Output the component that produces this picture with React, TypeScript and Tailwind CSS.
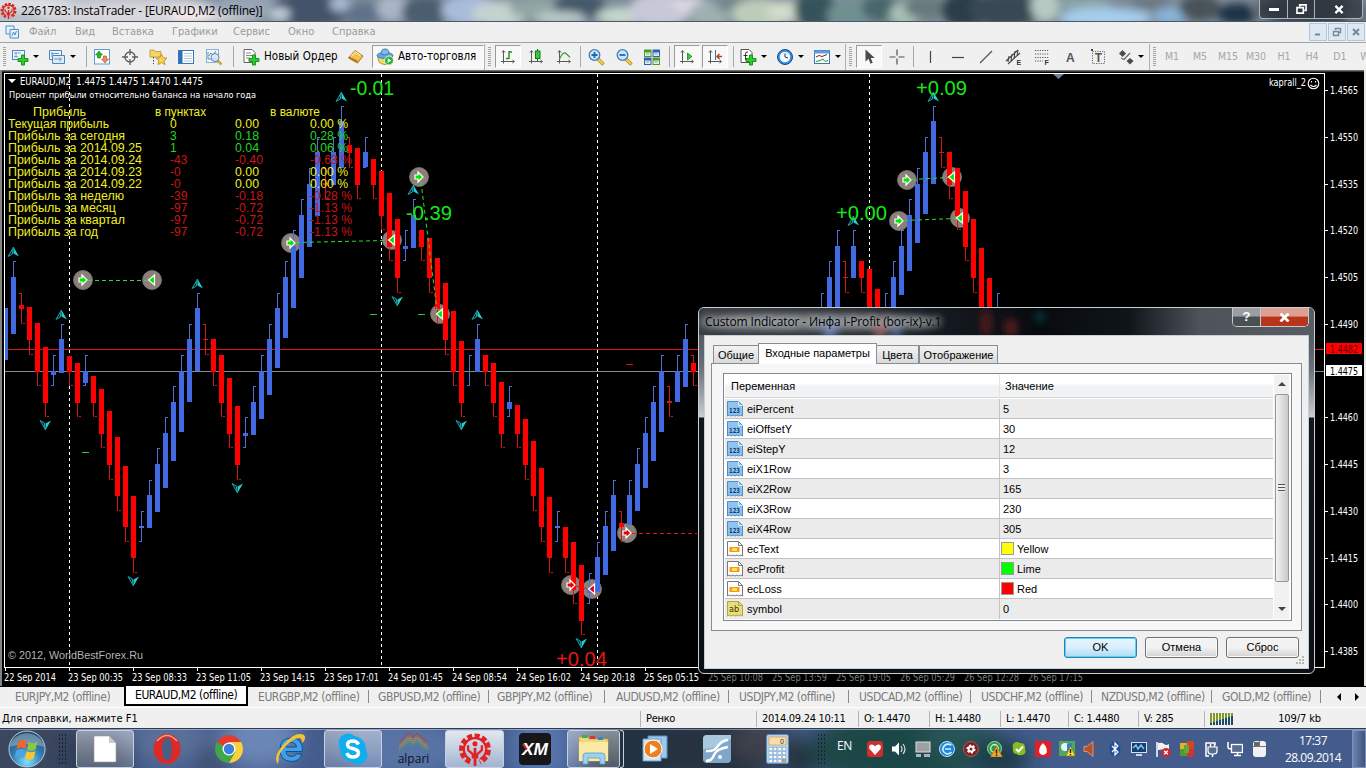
import type { ReactNode } from "react";
import clsx from "clsx";

const TAHOMA = "font-['DejaVu_Sans_Condensed','DejaVu_Sans',sans-serif]";
const BLUE = "#4169e1";
const RED = "#ff0000";

// [x, color, bodyTop, bodyBottom, wickTop, wickBottom]
type Candle = [number, "b" | "r", number, number, number, number];

const candles: Candle[] = [
  [5, "b", 308, 360, 308, 360], [13, "b", 277, 334, 261, 334], [21, "r", 305, 309, 293, 324], [29, "r", 307, 340, 307, 355],
  [37, "r", 323, 372, 323, 386], [45, "r", 347, 403, 347, 417], [53, "b", 371, 375, 355, 386], [61, "b", 339, 373, 324, 373],
  [69, "r", 356, 372, 356, 386], [77, "r", 363, 403, 363, 417], [85, "b", 371, 383, 355, 386], [93, "r", 376, 403, 376, 417],
  [101, "r", 389, 434, 389, 448], [109, "r", 411, 465, 411, 480], [117, "r", 437, 496, 437, 511], [125, "r", 466, 527, 466, 542],
  [133, "r", 496, 558, 496, 573], [141, "b", 526, 528, 511, 542], [149, "b", 495, 528, 480, 528], [157, "b", 464, 512, 448, 512],
  [165, "b", 433, 488, 417, 488], [173, "b", 402, 461, 386, 461], [181, "b", 371, 432, 355, 432], [189, "b", 339, 402, 324, 402],
  [197, "b", 308, 371, 293, 371], [205, "r", 339, 340, 324, 355], [213, "r", 339, 372, 339, 386], [221, "r", 355, 403, 355, 417],
  [229, "r", 378, 434, 378, 448], [237, "r", 406, 465, 406, 480], [245, "b", 433, 436, 417, 448], [253, "b", 402, 435, 386, 435],
  [261, "b", 371, 419, 355, 419], [269, "b", 339, 395, 324, 395], [277, "b", 308, 368, 293, 368], [285, "b", 277, 338, 261, 338],
  [293, "b", 246, 308, 230, 308], [301, "b", 215, 278, 199, 278], [309, "b", 184, 247, 168, 247], [317, "b", 152, 216, 137, 216],
  [325, "r", 183, 185, 168, 199], [333, "b", 152, 185, 137, 185], [341, "b", 121, 168, 106, 168], [349, "r", 145, 153, 137, 168],
  [357, "r", 148, 185, 148, 199], [365, "b", 152, 167, 137, 168], [373, "r", 159, 185, 159, 199], [381, "r", 171, 216, 171, 230],
  [389, "r", 193, 247, 193, 261], [397, "r", 219, 278, 219, 293], [405, "b", 246, 249, 230, 261], [413, "b", 215, 248, 199, 248],
  [421, "r", 230, 247, 230, 261], [429, "r", 238, 278, 238, 293], [437, "r", 258, 309, 258, 324], [445, "r", 283, 340, 283, 355],
  [453, "r", 311, 372, 311, 386], [461, "r", 341, 403, 341, 417], [469, "b", 371, 371, 355, 386], [477, "b", 339, 372, 324, 372],
  [485, "r", 355, 372, 355, 386], [493, "r", 363, 403, 363, 417], [501, "r", 382, 434, 382, 448], [509, "b", 402, 409, 386, 417],
  [517, "r", 405, 434, 405, 448], [525, "r", 419, 465, 419, 480], [533, "r", 441, 496, 441, 511], [541, "r", 468, 527, 468, 542],
  [549, "r", 497, 558, 497, 573], [557, "b", 526, 528, 511, 542], [565, "r", 527, 558, 527, 573], [573, "r", 542, 590, 542, 604],
  [581, "r", 565, 621, 565, 635], [589, "b", 588, 593, 573, 604], [597, "b", 557, 592, 542, 592], [605, "b", 526, 575, 511, 575],
  [613, "b", 495, 551, 480, 551], [621, "r", 523, 527, 511, 542], [629, "b", 495, 525, 480, 525], [637, "b", 464, 511, 448, 511],
  [645, "b", 433, 488, 417, 488], [653, "b", 402, 461, 386, 461], [661, "b", 371, 432, 355, 432], [669, "r", 401, 403, 386, 417],
  [677, "b", 371, 402, 355, 402], [685, "b", 339, 387, 324, 387], [693, "r", 363, 372, 355, 386], [821, "b", 308, 360, 293, 360],
  [829, "b", 277, 330, 261, 330], [837, "b", 246, 310, 230, 310], [845, "r", 277, 278, 261, 293], [853, "b", 246, 278, 230, 278],
  [861, "r", 261, 278, 261, 293], [869, "r", 269, 310, 269, 320], [877, "r", 289, 330, 289, 340], [885, "b", 308, 330, 293, 330],
  [893, "b", 277, 320, 261, 320], [901, "b", 246, 295, 230, 295], [909, "b", 215, 271, 199, 271], [917, "b", 184, 243, 168, 243],
  [925, "b", 152, 214, 137, 214], [933, "b", 121, 184, 106, 184], [941, "r", 152, 153, 137, 168], [949, "r", 152, 185, 152, 199],
  [957, "r", 168, 216, 168, 230], [965, "r", 191, 247, 191, 261], [973, "r", 219, 278, 219, 293], [981, "r", 248, 310, 248, 320],
  [989, "r", 278, 330, 278, 340], [997, "b", 308, 320, 293, 330],
];

const fractals: [number, number, boolean][] = [
  [13, 252, true], [61, 315, true], [197, 284, true], [341, 97, true], [413, 190, true], [477, 315, true], [853, 221, true], [933, 97, true],
  [45, 425, false], [133, 581, false], [237, 488, false], [397, 301, false], [461, 425, false], [581, 643, false],
];

const deals: [number, number, "open" | "close", string][] = [
  [83, 280, "open", "#00e600"], [152, 280, "close", "#00e600"], [291, 243, "open", "#00e600"], [392, 240, "close", "#00e600"],
  [419, 177, "open", "#00e600"], [440, 314, "close", "#00e600"], [571, 585, "open", "#e60000"], [592, 589, "close", "#e60000"],
  [627, 533, "open", "#e60000"], [907, 180, "open", "#00e600"], [952, 177, "close", "#00e600"], [899, 221, "open", "#00e600"],
  [960, 218, "close", "#00e600"],
];

const Y = "#eeee22";
const G = "#22d622";
const R = "#cc1414";
const profits: [string, number, string, string, string, string, string, string][] = [
  ["Текущая прибыль", 101, "0", Y, "0.00", Y, "0.00 %", Y],
  ["Прибыль за сегодня", 117, "3", G, "0.18", G, "0.28 %", G],
  ["Прибыль за 2014.09.25", 134, "1", G, "0.04", G, "0.06 %", G],
  ["Прибыль за 2014.09.24", 134, "-43", R, "-0.40", R, "-0.63 %", R],
  ["Прибыль за 2014.09.23", 134, "-0", R, "0.00", Y, "0.00 %", Y],
  ["Прибыль за 2014.09.22", 134, "-0", R, "0.00", Y, "0.00 %", Y],
  ["Прибыль за неделю", 116, "-39", R, "-0.18", R, "-0.28 %", R],
  ["Прибыль за месяц", 108, "-97", R, "-0.72", R, "-1.13 %", R],
  ["Прибыль за квартал", 117, "-97", R, "-0.72", R, "-1.13 %", R],
  ["Прибыль за год", 90, "-97", R, "-0.72", R, "-1.13 %", R],
];

const times = [
  "22 Sep 2014", "23 Sep 00:35", "23 Sep 08:33", "23 Sep 11:05", "23 Sep 14:15", "23 Sep 17:01", "24 Sep 01:45", "24 Sep 08:54", "24 Sep 16:02",
  "24 Sep 20:18", "25 Sep 05:15", "25 Sep 10:08", "25 Sep 13:59", "25 Sep 19:05", "26 Sep 05:29", "26 Sep 12:28", "26 Sep 17:15",
];

const prices = ["1.4565", "1.4550", "1.4535", "1.4520", "1.4505", "1.4490", "", "1.4460", "1.4445", "1.4430", "1.4415", "1.4400", "1.4385"];

const Label = ({ x, y, w, fill, size, font, children }: { x: number; y: number; w?: number; fill: string; size: number; font?: string; children: string }) => (
  <text x={x} y={y} textLength={w} lengthAdjust="spacingAndGlyphs" fill={fill} fontSize={size} fontFamily={font ?? "Liberation Sans, sans-serif"} style={{ whiteSpace: "pre" }}>
    {children}
  </text>
);

const CandleShape = ({ c }: { c: Candle }) => {
  const [x, k, t, b, wt, wb] = c;
  const wick = k === "b" ? "#5070d8" : "#d01818";
  const up = k === "b" ? 1 : -2;
  return (
    <g shapeRendering="crispEdges">
      <rect x={x} y={wt} width={1} height={wb - wt} fill={wick} />
      {wt < t && <rect x={x + up} y={wt} width={2} height={1} fill={wick} />}
      {wb > b && <rect x={x - up - (k === "b" ? 1 : 0)} y={wb - 1} width={2} height={1} fill={wick} />}
      {b > t && <rect x={x - 2} y={t} width={5} height={b - t} fill={b - t < 3 ? wick : k === "b" ? BLUE : RED} />}
    </g>
  );
};

const Chart = () => (
  <svg className="absolute inset-0" width="1366" height="616" viewBox="0 70 1366 616">
    <rect x="0" y="70" width="1366" height="616" fill="#000" />
    <rect x="0" y="70" width="1366" height="1.5" fill="#6f6f6b" />
    <rect x="0" y="70" width="2" height="616" fill="#85857f" />
    <rect x="1364" y="70" width="2" height="616" fill="#e8e8e4" />
    <clipPath id="plot">
      <rect x="5" y="74" width="1319" height="593" />
    </clipPath>
    <g clipPath="url(#plot)" shapeRendering="crispEdges">
      {[69, 381, 597, 869].map((x) => (
        <line key={x} x1={x + 0.5} x2={x + 0.5} y1="74" y2="665" stroke="#fff" strokeDasharray="3 3" />
      ))}
      <rect x="5" y="349" width="1320" height="1" fill="#e01414" />
      <rect x="5" y="371" width="1320" height="1" fill="#7f8b96" />
    </g>
    <g clipPath="url(#plot)">
      {deals.map(([x, y]) => (
        <circle key={`${x}-${y}`} cx={x} cy={y} r="9.5" fill="#8b7f77" stroke="#7a7a80" strokeWidth="0.8" />
      ))}
      {candles.map((c) => (
        <CandleShape key={c[0]} c={c} />
      ))}
      <g stroke="#2fdc2f" strokeDasharray="4 3" fill="none">
        <path d="M88 280.5H147M296 242.5L387 240.5M421 182L437 310M912 179.5L948 177.5M904 220.5L956 218.5" />
        <path stroke="#dc1a1a" d="M632 533.5H697M576 586L588 589" />
      </g>
      {fractals.map(([x, y, up]) => (
        <g key={`${x}-${y}`} transform={`translate(${x + 0.5} ${y}) scale(1 ${up ? 1 : -1})`} strokeWidth="1">
          <path d="M0 -5L-5.500 4.500L-1 2V-1Z" fill="#052a2e" stroke="#1a9ea6" />
          <path d="M0 -5L5.500 4.500L0 1.500Z" fill="#28ccd0" />
        </g>
      ))}
      {deals.map(([x, y, kind, fill]) => (
        <path
          key={`${x}-${y}-m`}
          fill={fill}
          stroke="#fff"
          strokeWidth="1.2"
          d={kind === "open" ? `M${x - 4} ${y - 2}h3v-3l5 5l-5 5v-3h-3z` : `M${x + 2.500} ${y - 5}v10l-6 -5z`}
        />
      ))}
      <path d="M82 452.500h7M370 314.500h7M418 314.500h7" stroke="#2ccc2c" />
      <path d="M626 364.500h7" stroke="#c01818" />
    </g>
    <path d="M4.500 667.500V73.500H1324.500V667.500H4" fill="none" stroke="#fff" shapeRendering="crispEdges" />
    <path d="M8 79h8l-4 4z" fill="#fff" />
    <path d="M1053 74h11l-5.500 5z" fill="#708090" />
    <Label x={20} y={85} w={183} size={10} fill="#fff" font="DejaVu Sans Condensed">{"EURAUD,M2  1.4475 1.4475 1.4470 1.4475"}</Label>
    <Label x={9} y={98} w={247} size={9} fill="#fff" font="DejaVu Sans Condensed">Процент прибыли относительно баланса на начало года</Label>
    <Label x={33} y={116} w={53} size={12} fill={Y}>Прибыль</Label>
    <Label x={155} y={116} w={51} size={12} fill={Y}>в пунктах</Label>
    <Label x={270} y={116} w={50} size={12} fill={Y}>в валюте</Label>
    {profits.map((p, i) => (
      <g key={p[0]}>
        <Label x={8} y={128 + i * 12} w={p[1]} size={12} fill={Y}>{p[0]}</Label>
        <Label x={170} y={128 + i * 12} size={12} fill={p[3]}>{p[2]}</Label>
        <Label x={235} y={128 + i * 12} w={p[4].length > 4 ? 28 : 24} size={12} fill={p[5]}>{p[4]}</Label>
        <Label x={310} y={128 + i * 12} w={p[6].length > 6 ? 42 : 38} size={12} fill={p[7]}>{p[6]}</Label>
      </g>
    ))}
    <Label x={350} y={95} w={44} size={20} fill="#19e619">-0.01</Label>
    <Label x={406} y={220} w={46} size={20} fill="#19e619">-0.39</Label>
    <Label x={836} y={220} w={51} size={20} fill="#19e619">+0.00</Label>
    <Label x={916} y={95} w={51} size={20} fill="#19e619">+0.09</Label>
    <Label x={556} y={666} w={51} size={20} fill="#e31818">+0.04</Label>
    <Label x={1269} y={86} w={37} size={10} fill="#fff" font="DejaVu Sans Condensed">kaprall_2</Label>
    <g fill="none" stroke="#fff" strokeWidth="1.1">
      <circle cx="1313.500" cy="83.500" r="5.300" />
      <path d="M1311.500 81v1.500M1315.500 81v1.500M1310.500 85q3 3 6 0" />
    </g>
    <Label x={8} y={659} w={135} size={11.5} fill="#b4b4b4">© 2012, WorldBestForex.Ru</Label>
    {prices.map((p, i) =>
      p ? (
        <g key={p}>
          <rect x="1325" y={90 + Math.round(i * 46.75)} width="3" height="1" fill="#fff" />
          <Label x={1330} y={94 + Math.round(i * 46.75)} w={28} size={10} fill="#fff" font="DejaVu Sans Condensed">{p}</Label>
        </g>
      ) : null,
    )}
    <rect x="1326" y="343" width="36" height="11" fill="#ff0000" />
    <Label x={1330} y={352.5} w={28} size={10} fill="#5a0000" font="DejaVu Sans Condensed">1.4482</Label>
    <rect x="1326" y="365" width="36" height="11" fill="#fff" />
    <Label x={1330} y={374.5} w={28} size={10} fill="#000" font="DejaVu Sans Condensed">1.4475</Label>
    {times.map((t, i) => (
      <g key={t}>
        {i < 11 && <rect x={5 + i * 64} y="668" width="1" height="3" fill="#fff" />}
        <Label x={4 + i * 64} y={681} w={i ? 55 : 52} size={10} fill={i < 11 ? "#fff" : "#7a7a7a"} font="DejaVu Sans Condensed">{t}</Label>
      </g>
    ))}
  </svg>
);

const Blobs = ({ items, w, h, blur, id, grow = 1 }: { items: [number, number, number, number, string][]; w: number; h: number; blur: number; id: string; grow?: number }) => (
  <svg className="absolute inset-0" width={w} height={h}>
    <filter id={id} x="-20%" y="-50%" width="140%" height="200%">
      <feGaussianBlur stdDeviation={blur} />
    </filter>
    <g filter={`url(#${id})`}>
      {items.map(([x, y, rx, ry, fill], i) => (
        <ellipse key={i} cx={x} cy={y} rx={rx * grow} ry={ry * grow} fill={fill} />
      ))}
    </g>
  </svg>
);

const titleBlobs: [number, number, number, number, string][] = [
  [60, 10, 120, 18, "#b9bfca"], [20, 4, 40, 5, "#dfe3e8"], [150, 14, 90, 9, "#d8d7dc"], [190, 16, 16, 6, "#f4e9ea"], [250, 6, 30, 8, "#97a5b6"],
  [310, 10, 30, 14, "#42526b"], [280, 14, 8, 5, "#c3cfdb"], [340, 4, 8, 6, "#a9bad0"], [365, 14, 16, 8, "#5d7188"], [392, 8, 12, 10, "#a8b6c6"],
  [425, 12, 18, 12, "#4c5d70"], [470, 10, 22, 12, "#a9bcdb"], [500, 14, 22, 10, "#c4d3cf"], [535, 8, 20, 8, "#91a6a5"], [580, 6, 20, 10, "#44596a"],
  [560, 18, 20, 5, "#bccbc8"], [625, 16, 22, 7, "#c5d8cc"], [660, 10, 24, 14, "#c7c8d8"], [690, 4, 14, 6, "#dcd8e2"], [710, 14, 16, 10, "#9eb0b0"],
  [735, 4, 15, 7, "#75878a"], [760, 14, 22, 12, "#bdccba"], [785, 12, 14, 8, "#d3dccb"], [815, 10, 16, 14, "#35525a"], [850, 14, 18, 9, "#6f9090"],
  [880, 8, 14, 10, "#4a666a"], [905, 14, 12, 9, "#a9c2b6"], [925, 8, 16, 8, "#66797a"], [965, 10, 18, 14, "#2b3d49"], [1005, 10, 28, 14, "#394954"],
  [1045, 6, 11, 12, "#b7cac3"], [1085, 4, 20, 5, "#8ca9a9"], [1105, 18, 36, 8, "#a6cdee"], [1170, 16, 12, 7, "#88b3d8"], [1150, 3, 16, 4, "#68747c"],
  [1200, 8, 16, 10, "#4a5258"], [1238, 14, 16, 8, "#1f3046"], [1262, 8, 8, 8, "#6b7680"], [1310, 10, 38, 14, "#3b444d"], [1360, 14, 10, 9, "#67707a"],
];

const Gear = ({ size, fill }: { size: number; fill: string }) => (
  <svg width={size} height={size} viewBox="0 0 32 32" className="shrink-0" fill="none" stroke={fill}>
    <path d="M11.500 28A12.500 12.500 0 1 1 20.500 28" strokeWidth="5" strokeDasharray="4.600 2.200" />
    <path d="M11 25.500A10.500 10.500 0 1 1 21 25.500" strokeWidth="2.200" />
    <path d="M16 15v17" strokeWidth="2.600" />
    <path d="M14 25v-4L9.500 17V12.500M18 25v-4l4.500-4V12.500" strokeWidth="2.200" />
    <circle cx="16" cy="11" r="2.400" fill={fill} stroke="none" />
  </svg>
);

const TitleBar = () => (
  <header className="relative flex h-[21px] items-center overflow-hidden bg-[#7d8b98]">
    <Blobs items={titleBlobs} w={1366} h={22} blur={4.5} grow={1.3} id="tb" />
    <div className="relative flex h-full w-full items-center">
      <Gear size={17} fill="#d9261c" />
      <span className="ml-[4px] w-[242px] whitespace-nowrap font-['Open_Sans',sans-serif] text-[12px] tracking-[-0.22px] text-black">2261783: InstaTrader - [EURAUD,M2 (offline)]</span>
      <div className="ml-auto mr-[3px] flex h-[19px] self-start overflow-hidden rounded-b-[4px] border border-t-0 border-[#a9b3ba] bg-[#2c353d]/70 text-white">
        <span className="flex w-7 items-center justify-center border-r border-[#a9b3ba]"><i className="block h-[3px] w-[10px] bg-white" /></span>
        <span className="flex w-[27px] items-center justify-center border-r border-[#a9b3ba]">
          <svg width="11" height="10" viewBox="0 0 12 11" fill="none" stroke="#fff" strokeWidth="1.800"><path d="M4 3V1h7v6H9" /><path d="M1 4h7v6H1z" /></svg>
        </span>
        <span className="flex w-[47px] items-center justify-center">
          <svg width="10" height="9" viewBox="0 0 11 10" stroke="#fff" strokeWidth="2.600"><path d="M1.500 1l8 8M9.500 1l-8 8" /></svg>
        </span>
      </div>
    </div>
  </header>
);

const menu: [string, string][] = [
  ["Файл", "w-[46px]"], ["Вид", "w-[37px]"], ["Вставка", "w-[60px]"], ["Графики", "w-[61px]"], ["Сервис", "w-[55px]"], ["Окно", "w-[44px]"], ["Справка", "w-[60px]"],
];

const MdiButton = ({ children }: { children: ReactNode }) => (
  <span className="flex h-[18px] w-[18px] items-center justify-center border border-[#b3c7d8] bg-[#dce8f3]">
    <svg width="10" height="10" fill="none" stroke="#78889a" strokeWidth="1.400">{children}</svg>
  </span>
);

const MenuBar = () => (
  <nav className={clsx("flex h-[22px] items-center border-b border-t border-b-[#a3a3a3] border-t-[#4c5864] bg-[#f0f0f0] text-[11px] text-[#9b9b9b]", TAHOMA)}>
    <svg width="15" height="15" className="ml-[5px] mr-[9px]" fill="#e8f2fb" stroke="#4e90c6">
      <path d="M1 1h8v8H1z" /><path d="M5 4.500h8.500v8.500H5z" /><path d="M7 11l1.500-4 1.500 3 1.500-4" fill="none" />
    </svg>
    <div className="flex whitespace-nowrap">
      {menu.map(([m, w]) => (
        <span key={m} className={w}>{m}</span>
      ))}
    </div>
    <div className="ml-auto mr-px flex gap-px">
      <MdiButton><path d="M2 7.500h5" strokeWidth="2" /></MdiButton>
      <MdiButton><path d="M3.500 3V1.500h5v4H7M1.500 4.500h5v4h-5z" /></MdiButton>
      <MdiButton><path d="M2 2l6 6M8 2l-6 6" strokeWidth="2" /></MdiButton>
    </div>
  </nav>
);

const Plus = () => <path d="M10.500 7h3v3.500H17v3h-3.500V17h-3v-3.500H7v-3h3.500z" fill="#2ecc2e" stroke="#118a11" strokeWidth="0.9" />;
const Axes = () => <path d="M4.500 3v12.500M2 13.500h13M3 4.500l1.500-2 1.500 2M13.500 12l2 1.500-2 1.500" fill="none" stroke="#5a5a5a" />;
const Magnifier = ({ d }: { d: string }) => (
  <>
    <path d="M11 11l5.500 5.500" stroke="#b98a12" strokeWidth="3.400" />
    <path d="M11 11l5 5" stroke="#f5cf52" strokeWidth="2" />
    <circle cx="7.500" cy="7" r="5.300" fill="#cfe6f8" stroke="#3d7db8" strokeWidth="1.300" />
    <path d={d} stroke="#1c68b4" strokeWidth="1.800" />
  </>
);

const icons: Record<string, ReactNode> = {
  newChart: (<><rect x="1.500" y="2.500" width="12" height="9" fill="#eef5fc" stroke="#4b86bd" /><path d="M3 5h7M3 8.500h4M5 4v6" stroke="#7ba7cf" /><Plus /></>),
  profiles: (<><path d="M1.500 2.500h12v9h-12z" fill="#eef5fc" stroke="#4b86bd" /><path d="M4.500 7.500h12v8h-12z" fill="#dcebf8" stroke="#4b86bd" /><path d="M3 5.500h8M4 4v5M6 11h8M12 9.500v4" stroke="#6f98bf" /></>),
  market: (<><rect x="1.500" y="1.500" width="15" height="14.500" fill="#fff" stroke="#5c9bd4" /><path d="M6 3l3.500 4H7.500v3h-3V7h-2z" fill="#26b526" stroke="#157a15" strokeWidth=".6" /><path d="M12 15l-3.500-4h2V8h3v3h2z" fill="#f08b54" stroke="#b1481c" strokeWidth=".6" /></>),
  cross: <g fill="none" stroke="#5c5c5c" strokeWidth="1.300"><circle cx="9" cy="9" r="5" /><path d="M9 1v6M9 11v6M1 9h6M11 9h6" /></g>,
  navigator: (<><path d="M1 2h4l1.500 1.500H12V9H1z" fill="#f5d564" stroke="#b8902c" strokeWidth=".8" /><path d="M4.500 9v7" stroke="#444" strokeDasharray="1.500 1.500" /><path d="M12.500 6l1.700 3.700 3.900.4-3 2.600.9 3.900-3.500-2-3.500 2 .9-3.900-3-2.600 3.900-.4z" fill="#fbd24c" stroke="#b8861c" strokeWidth=".8" /></>),
  terminal: (<><rect x="1.500" y="2.500" width="15" height="13" fill="#fff" stroke="#3577b8" /><path d="M2 3h3.500v12H2z" fill="#2b6fc0" /><path d="M7 5.500h8M7 8h8M7 10.500h8M7 13h8" stroke="#9cb6d2" strokeWidth=".8" /></>),
  tester: (<><rect x="1.500" y="1.500" width="12" height="13" fill="#f2f7fc" stroke="#8ab0d3" /><path d="M3 4v7h8M4 8l2-3 2 2 3-4" stroke="#5a8cb9" fill="none" /><path d="M12 12l4.500 4.500" stroke="#d9a62a" strokeWidth="2.500" /><circle cx="10" cy="9.500" r="4" fill="#cfe4f6cc" stroke="#5a88b0" /></>),
  order: (<><path d="M2 1.500h8l3 3v10H2z" fill="#fff" stroke="#666" /><path d="M4 5h5M4 7.500h7M4 10h4" stroke="#888" /><Plus /></>),
  meta: (<><path d="M1.500 10L8 2.500l8 5.500-5.500 7z" fill="#f2c14e" stroke="#a8751c" /><path d="M1.500 10l9 5v-2.500L2.500 8.500z" fill="#b9781c" /><path d="M4 8.500L8.500 4l5 3.500" fill="none" stroke="#fae6a2" strokeWidth="1.500" /></>),
  auto: (<><path d="M2 9q-.5 7 7 7.500Q16 16 16 9z" fill="#f3d765" stroke="#b69626" /><ellipse cx="9" cy="7.500" rx="8" ry="3" fill="#63a9dd" stroke="#3a7cb4" /><path d="M5 6q0-5 4-5t4 5q-4 2-8 0z" fill="#7dbcea" stroke="#3a7cb4" /><circle cx="13" cy="12.500" r="4.500" fill="#2fae37" stroke="#e6f6e6" /><path d="M11.700 10l3.600 2.500-3.600 2.500z" fill="#fff" /></>),
  bars: (<><Axes /><path d="M10 3v8M10 4h3M7 10.500h3" stroke="#1b8f1b" strokeWidth="1.400" /></>),
  candle: (<><Axes /><path d="M10.500 1v12" stroke="#0d6b0d" /><rect x="8.500" y="3" width="4.500" height="7.500" fill="#35cc35" stroke="#0f7a0f" /></>),
  line: (<><Axes /><path d="M4.500 11Q8 3 11 5.500T15 9.500" fill="none" stroke="#2c9b2c" strokeWidth="1.200" /></>),
  zoomIn: <Magnifier d="M4.500 7h6M7.500 4v6" />,
  zoomOut: <Magnifier d="M4.500 7h6" />,
  tile: (<><path d="M1 1.500h7.500V9H1zM9.500 9.500H17V17H9.500z" fill="#4c9a28" /><path d="M9.500 1.500H17V9H9.500z" fill="#2b62b8" /><path d="M1 9.500h7.500V17H1z" fill="#2b62b8" /><path d="M2 4.500h5.500V8H2zM10.500 4.500H16V8h-5.500zM2 12.500h5.500V16H2zM10.500 12.500H16V16h-5.500z" fill="#e4f0e0" /><path d="M3 6h3M11.500 6h3M3 14h3M11.500 14h3" stroke="#7ea5c8" /></>),
  shift: (<><Axes /><path d="M9.500 5l4.500 3.500-4.500 3.500z" fill="#3cc53c" stroke="#157a15" strokeWidth=".7" /></>),
  scroll: (<><Axes /><path d="M9.500 2v10" stroke="#3370b0" /><path d="M16 8.500h-5M13.500 6L11 8.500l2.500 2.500" stroke="#b3401c" strokeWidth="1.400" fill="none" /></>),
  indicators: (<><path d="M2 1.500h8l3 3v10H2z" fill="#fff" stroke="#555" /><path d="M9 4Q6.500 3.500 6.500 6v6M4.500 7.500h4" stroke="#333" fill="none" /><Plus /></>),
  clock: (<><circle cx="9" cy="9" r="7.500" fill="#3f8ee0" stroke="#0f4c94" /><circle cx="9" cy="9" r="5.200" fill="#f4f9ff" /><path d="M9 5.500V9l3 1" fill="none" stroke="#333" /></>),
  template: (<><rect x="1.500" y="2.500" width="15" height="13" fill="#fff" stroke="#3a78b8" /><path d="M1.500 2.500h15v3h-15z" fill="#5c9ede" /><path d="M3 9l3-1.500 3 1 5-2" stroke="#912" fill="none" /><path d="M3 13.500l4-1 3-1.500 2 2.500 3-1" stroke="#1b9b1b" fill="none" /></>),
  cursor: <path d="M5.500 1.500v12l3-2.800 2 5 2.200-1-2-4.700h4z" fill="#4a4a4a" />,
  crosshair: <path d="M9 1.500v6M9 10.500v6M1.500 9h6M10.500 9h6" stroke="#4f4f4f" strokeWidth="1.200" />,
  vline: <path d="M9.500 3v12" stroke="#444" strokeWidth="1.200" />,
  hline: <path d="M3 9.500h12" stroke="#444" strokeWidth="1.200" />,
  trend: <path d="M3 15L15 3" stroke="#555" strokeWidth="1.200" />,
  channel: (<><path d="M1 13L13 2M3 16L15 5M4 8l-1 6M7 6l-1 7M10 3l-1 8M13 2l-1 6" stroke="#444" strokeWidth="1.100" /><text x="11.500" y="17" fontSize="7" fontWeight="bold" fontFamily="Liberation Sans" fill="#333">E</text></>),
  fibo: (<><path d="M2 2.500h14M2 6h14M2 9.500h14M2 13h8" stroke="#555" strokeDasharray="1.200 1.200" /><text x="11.500" y="17" fontSize="7" fontWeight="bold" fontFamily="Liberation Sans" fill="#333">F</text></>),
  text: <text x="5" y="14" fontSize="12" fontWeight="bold" fontFamily="Liberation Sans" fill="#555">A</text>,
  label: (<><rect x="3.500" y="3.500" width="12" height="12" fill="none" stroke="#666" strokeDasharray="1.200 1.200" /><text x="5.800" y="14" fontSize="12" fontWeight="bold" fontFamily="Liberation Sans" fill="#555">T</text><path d="M2 1h2v2H2z" fill="#444" /></>),
  arrows: (<><path d="M5.500 2l3.500 3.500-3.500 3.500-3.500-3.500z" fill="#4a4a4a" /><path d="M13 10l3.500 3-3.500 3.500-3.500-3.500z" fill="#4a4a4a" /><path d="M4 10l3 1.500L13 5" stroke="#666" fill="none" strokeWidth="1.200" /></>),
};

const Icon = ({ name }: { name: string }) => (
  <svg width="18" height="18" viewBox="0 0 18 18" className="shrink-0">{icons[name]}</svg>
);

const Tool = ({ name, on }: { name: string; on?: boolean }) => (
  <span className="flex h-[23px] w-7 shrink-0 items-center justify-center">
    <span className={clsx("flex h-[23px] w-[26px] items-center justify-center", on && "border border-b-white border-l-[#9b9b9b] border-r-white border-t-[#9b9b9b] bg-[#f8f8f8]")}>
      <Icon name={name} />
    </span>
  </span>
);

const DropTool = ({ name }: { name: string }) => (
  <span className="flex h-full w-[37px] shrink-0 items-center gap-[4px] pl-px">
    <Icon name={name} />
    <i className="block border-x-[3px] border-t-[3px] border-x-transparent border-t-black" />
  </span>
);

const Sep = ({ className }: { className: string }) => (
  <span className={clsx("flex shrink-0 justify-center", className)}><i className="block h-[21px] w-px bg-[#a8a8a8]" /></span>
);

const Grip = ({ line = true, className = "w-[10px]" }: { line?: boolean; className?: string }) => (
  <span className={clsx("flex h-full shrink-0 items-center gap-[3px]", className)}>
    <i className={clsx("block h-[26px] w-px", line ? "bg-[#b0b0b0]" : "-mr-[3px]")} />
    <i className="block h-[19px] w-[3px] bg-[repeating-linear-gradient(to_bottom,#a4a4a4_0_1px,#f0f0f0_1px_2px)]" />
  </span>
);

const Toolbar = () => (
  <div className={clsx("flex h-[27px] items-center overflow-hidden bg-[#f0f0f0] text-[11.5px]", TAHOMA)}>
    <span className="flex w-[10px] shrink-0 pl-[2px]"><Grip line={false} /></span>
    <DropTool name="newChart" />
    <DropTool name="profiles" />
    <Sep className="w-[4px]" />
    {["market", "cross", "navigator", "terminal", "tester"].map((n) => <Tool key={n} name={n} />)}
    <Sep className="w-[10px]" />
    <span className="flex w-[104px] shrink-0 items-center gap-[4px] whitespace-nowrap pl-[4px]"><Icon name="order" /><span className="tracking-[0.05px]">Новый Ордер</span></span>
    <Tool name="meta" />
    <span className="ml-[2px] flex h-[23px] w-[112px] shrink-0 items-center gap-[4px] whitespace-nowrap border border-b-white border-l-[#9b9b9b] border-r-white border-t-[#9b9b9b] bg-[#f8f8f8] pl-[3px]">
      <Icon name="auto" /><span className="tracking-[-0.05px]">Авто-торговля</span>
    </span>
    <Grip />
    <Tool name="bars" on />
    <Tool name="candle" />
    <Tool name="line" />
    <Sep className="w-[4px]" />
    <Tool name="zoomIn" />
    <Tool name="zoomOut" />
    <Tool name="tile" />
    <Sep className="w-[7px]" />
    <Tool name="shift" on />
    <Tool name="scroll" on />
    <Sep className="w-[9px]" />
    <DropTool name="indicators" />
    <DropTool name="clock" />
    <DropTool name="template" />
    <Grip className="-ml-[4px] w-[10px]" />
    <Tool name="cursor" on />
    <Tool name="crosshair" />
    <Sep className="w-[5px]" />
    {["vline", "hline", "trend", "channel", "fibo", "text", "label"].map((n) => <Tool key={n} name={n} />)}
    <span className="flex w-[37px] shrink-0 items-center gap-[3px] pl-[5px]">
      <Icon name="arrows" />
      <i className="block border-x-[3px] border-t-[3px] border-x-transparent border-t-black" />
    </span>
    <Grip className="w-[9px]" />
    {["M1", "M5", "M15", "M30", "H1", "H4", "D1", "W1"].map((t) => (
      <span key={t} className="w-7 shrink-0 text-center text-[10.5px] text-[#a6a6a6]">{t}</span>
    ))}
  </div>
);

const ParamIcon = ({ kind }: { kind: "int" | "color" | "str" }) => (
  <svg width="16" height="16" className="shrink-0">
    <path
      d="M.5 .500h11l4 4v10.500l-2-1-1.500 1-2-1-2 1-2-1-2 1-1.500-1-2 1z"
      fill={kind === "int" ? "#8fc3f0" : kind === "color" ? "#fff" : "#e9dc7e"}
      stroke={kind === "int" ? "#4f8cc4" : kind === "color" ? "#777" : "#b5a43c"}
    />
    <path d="M11.500 .500v4h4" fill="none" stroke={kind === "int" ? "#d8ecfc" : kind === "color" ? "#777" : "#b5a43c"} />
    {kind === "int" && <text x="2" y="11.500" fontSize="7" fontWeight="bold" fontFamily="DejaVu Sans Condensed" textLength="11" lengthAdjust="spacingAndGlyphs" fill="#113a6b">123</text>}
    {kind === "color" && (<><rect x="2.500" y="6" width="10" height="5" fill="#f39a1e" /><rect x="5" y="7" width="5" height="3" fill="#ffe14a" /></>)}
    {kind === "str" && <text x="2" y="11" fontSize="9" fontFamily="DejaVu Sans Condensed" fill="#3b3500">ab</text>}
  </svg>
);

const params: [string, "int" | "color" | "str", string, string?][] = [
  ["eiPercent", "int", "5"], ["eiOffsetY", "int", "30"], ["eiStepY", "int", "12"], ["eiX1Row", "int", "3"], ["eiX2Row", "int", "165"],
  ["eiX3Row", "int", "230"], ["eiX4Row", "int", "305"], ["ecText", "color", "Yellow", "bg-[#ffff00]"], ["ecProfit", "color", "Lime", "bg-[#00ff00]"],
  ["ecLoss", "color", "Red", "bg-[#ff0000]"], ["symbol", "str", "0"],
];

const Tab = ({ className, active, children }: { className: string; active?: boolean; children: string }) => (
  <span className={clsx("relative flex justify-center border border-[#898c95]", className, active ? "z-10 -mb-px h-[21px] items-center border-b-0 bg-white pb-[1px]" : "h-[18px] items-center border-b-0 bg-gradient-to-b from-[#f3f3f3] to-[#d9d9d9] pt-px")}>
    {children}
  </span>
);

const DialogButton = ({ primary, children }: { primary?: boolean; children: string }) => (
  <button
    className={clsx(
      "flex h-[21px] w-[73px] items-center justify-center rounded-[3px] border",
      primary ? "border-[#2c7fae] bg-gradient-to-b from-[#e8f5fc] via-[#d9effb] to-[#a9dbf5] shadow-[inset_0_0_0_1px_#5fd0f5]" : "border-[#707070] bg-gradient-to-b from-[#f2f2f2] from-50% to-[#d2d2d2] shadow-[inset_0_0_0_1px_#fafafa]",
    )}
  >
    {children}
  </button>
);

const Dialog = () => (
  <div className="absolute left-[698px] top-[237px] flex h-[367px] w-[617px] flex-col overflow-hidden rounded-[6px] border border-[#c9ced2] bg-[linear-gradient(to_bottom,#43484d_0,#6a7078_60px,#c8ccd0_109px,#11171d_110px,#0b1016_100%)] px-[5px] pb-[4px] font-['Liberation_Sans',Arial,sans-serif] text-[11px] text-black">
    <div className="relative -mx-[5px] flex h-[27px] shrink-0 items-center overflow-hidden bg-[linear-gradient(to_right,#3a3f44_0,#14191f_250px,#070b10_340px,#10151a_430px,#4d5359_500px,#575d63_100%)]">
      <Blobs
        items={[[120, 14, 122, 8, "#85898d"], [60, 14, 50, 7, "#8d9195"], [131, 22, 7, 10, "#6b7fb8"], [181, 22, 6, 10, "#a06064"], [197, 24, 5, 8, "#5c6c9c"], [287, 15, 5, 14, "#541a1f"], [312, 20, 6, 10, "#5f1a1f"], [341, 9, 4, 5, "#0c4a4f"]]}
        w={617} h={27} blur={4} id="dlg"
      />
      <span className="relative ml-[6px] whitespace-nowrap font-['Open_Sans',sans-serif] text-[12px] tracking-[-0.12px] [text-shadow:0_0_6px_#c0c4c8,0_0_8px_#a8acb0]">Custom Indicator - Инфа i-Profit (bor-ix)-v.1</span>
      <div className="relative ml-auto mr-[5px] flex h-[19px] self-start overflow-hidden rounded-b-[5px] border border-t-0 border-[#c5c9cc]">
        <span className="flex w-7 items-center justify-center border-r border-[#c5c9cc] bg-gradient-to-b from-[#9a9ea2] from-45% to-[#4a4f54] to-50% font-bold text-[13px] text-white">?</span>
        <span className="flex w-[47px] items-center justify-center bg-gradient-to-b from-[#dba093] from-45% to-[#b8351b] to-50%">
          <svg width="11" height="9" stroke="#fff" strokeWidth="2.800"><path d="M1.500 .500l8 8M9.500 .500l-8 8" /></svg>
        </span>
      </div>
    </div>
    <div className="flex flex-1 flex-col border border-[#c9ced2] bg-[#f0f0f0] px-[6px] pt-[6px]">
      <div className="ml-[2px] flex h-[21px] items-end whitespace-nowrap">
        <Tab className="w-[45px] border-r-0">Общие</Tab>
        <Tab className="w-[119px]" active>Входные параметры</Tab>
        <Tab className="w-[42px] border-l-0">Цвета</Tab>
        <Tab className="w-[79px]">Отображение</Tab>
      </div>
      <div className="h-[268px] w-[591px] border border-[#898c95] bg-[#f7f7f7] p-[9px] pl-[11px]">
        <div className="flex h-[248px] w-[569px] border border-[#828790] bg-white p-px pr-[2px]">
          <div className="flex-1 overflow-hidden">
            <div className="flex h-[23px] items-center border-b border-[#d5d5d5] bg-gradient-to-b from-white from-40% to-[#f1f2f4] to-50%">
              <span className="w-[275px] border-r border-[#e3e4e6] pl-[6px] pt-px leading-[21px]">Переменная</span>
              <span className="pl-[5px] pt-px">Значение</span>
            </div>
            <div className="h-px bg-white" />
            {params.map(([name, kind, value, swatch], i) => (
              <div key={name} className={clsx("flex h-[20px] items-center border-b border-[#c3c3c3]", i % 2 ? "bg-white" : "bg-[#ebebeb]", i === 10 && "border-b-0")}>
                <span className="flex h-full w-[275px] items-center gap-[4px] border-r border-[#c3c3c3] pl-[2px]"><ParamIcon kind={kind} /><span className="pt-px">{name}</span></span>
                <span className={clsx("flex items-center gap-[3px]", swatch ? "pl-px" : "pl-[3px]")}>
                  {swatch && <i className={clsx("block h-[13px] w-[13px] border border-[#9a9a9a]", swatch)} />}
                  <span className="pt-px">{value}</span>
                </span>
              </div>
            ))}
          </div>
          <div className="ml-px flex w-[15px] flex-col items-center bg-[#f1f1f1]">
            <i className="mb-[8px] mt-[7px] block border-x-[4px] border-b-[4px] border-x-transparent border-b-[#444]" />
            <div className="flex h-[188px] w-[14px] items-center justify-center rounded-[2px] border border-[#979797] bg-gradient-to-r from-[#f3f3f3] to-[#c9c9c9]">
              <i className="block h-[8px] w-[7px] bg-[repeating-linear-gradient(to_bottom,#555_0_1px,#eee_1px_3px)]" />
            </div>
            <i className="mb-[8px] mt-auto block border-x-[4px] border-t-[4px] border-x-transparent border-t-[#444]" />
          </div>
        </div>
      </div>
      <div className="mt-[6px] flex justify-end gap-[8px] pr-[3px]">
        <DialogButton primary>OK</DialogButton>
        <DialogButton>Отмена</DialogButton>
        <DialogButton>Сброс</DialogButton>
      </div>
      <svg width="10" height="9" className="-mr-[3px] -mt-[2px] ml-auto" fill="#b5b5b5"><path d="M7 0h2v2H7zM4 3h2v2H4zM7 3h2v2H7zM1 6h2v2H1zM4 6h2v2H4zM7 6h2v2H7z" /></svg>
    </div>
  </div>
);

const chartTabs: [string, string][] = [
  ["EURJPY", "w-[124px] pl-[15px]"], ["EURAUD", "w-[124px] pl-[9px]"], ["EURGBP", "w-[121px] pl-[10px]"], ["GBPUSD", "w-[120px] pl-[9px]"], ["GBPJPY", "w-[116px] pl-[8px]"],
  ["AUDUSD", "w-[124px] pl-[11px]"], ["USDJPY", "w-[120px] pl-[10px]"], ["USDCAD", "w-[122px] pl-[10px]"], ["USDCHF", "w-[121px] pl-[10px]"], ["NZDUSD", "w-[120px] pl-[9px]"], ["GOLD", "w-[109px] pl-[10px]"],
];

const ChartTabs = () => (
  <div className={clsx("flex h-[22px] shrink-0 border-b border-white bg-[#f0f0f0] text-[12px] text-[#7b7b7b]", TAHOMA)}>
    {chartTabs.map(([t, w], i) => (
      <span
        key={t}
        className={clsx("flex h-[20px] shrink-0 items-center whitespace-nowrap tracking-[-0.43px]", w, i === 1 ? "border-2 border-t-0 border-black bg-white text-black" : "border-t border-black")}
      >
        <span className="flex-1">{t},M2 (offline)</span>
        {i > 1 && <i className="block h-[13px] w-px bg-[#8a8a8a]" />}
      </span>
    ))}
    <span className="flex h-[20px] flex-1 items-center justify-between border-t border-black pl-[16px] pr-[7px]">
      <i className="block border-y-[4px] border-r-[4px] border-y-transparent border-r-black" />
      <i className="block border-y-[4px] border-l-[4px] border-y-transparent border-l-black" />
    </span>
  </div>
);

const status: [string, string][] = [
  ["Ренко", "w-[116px]"], ["2014.09.24 10:11", "w-[102px]"], ["O: 1.4470", "w-[71px]"], ["H: 1.4480", "w-[71px]"], ["L: 1.4470", "w-[68px]"], ["C: 1.4480", "w-[70px]"], ["V: 285", "w-[66px]"],
];

const StatusBar = () => (
  <div className={clsx("flex h-[20px] shrink-0 items-center whitespace-nowrap bg-[#f0f0f0] pt-[2px] text-[11px] tracking-[-0.3px] text-black", TAHOMA)}>
    <span className="w-[640px] pl-[2px] tracking-[0.07px]">Для справки, нажмите F1</span>
    {status.map(([s, w]) => (
      <span key={s} className={clsx("h-[16px] shrink-0 border-l border-[#b4b4b4] pl-[5px] leading-[16px]", w)}>{s}</span>
    ))}
    <span className="flex h-[16px] flex-1 items-center border-l border-[#b4b4b4] pl-[5px]">
      <svg width="24" height="14">
        {Array.from({ length: 8 }, (_, i) => (
          <g key={i}>
            <rect x={i * 3} y="1" width="2" height={10 - i} fill="#7e9a24" />
            <rect x={i * 3} y={11 - i} width="2" height={i + 2} fill="#1c4a6e" />
          </g>
        ))}
      </svg>
      <span className="ml-auto mr-[45px] tracking-[-0.1px]">109/7 kb</span>
    </span>
  </div>
);

const taskBlobs: [number, number, number, number, string][] = [
  [30, 20, 60, 40, "#3a475e"], [95, 30, 40, 30, "#33415a"], [170, 10, 40, 25, "#5a7099"], [215, 30, 20, 15, "#3b4c6c"], [260, 10, 40, 30, "#6b86b6"],
  [400, 20, 60, 30, "#5873a6"], [540, 16, 30, 40, "#5674ae"], [640, 20, 60, 40, "#24303f"], [720, 20, 60, 40, "#26323f"], [760, 10, 30, 20, "#40424e"],
  [800, 30, 20, 20, "#23323c"], [900, 20, 90, 40, "#1f4746"], [960, 10, 40, 20, "#275457"], [1000, 30, 30, 20, "#1e3d48"],
];

const TaskButton = ({ className, framed, bright, children }: { className: string; framed?: boolean; bright?: boolean; children: ReactNode }) => (
  <span
    className={clsx(
      "flex h-[38px] shrink-0 items-center justify-center",
      className,
      framed && "rounded-[3px] border border-[#c6d0de]",
      framed && (bright ? "bg-gradient-to-b from-[#f4f6fa]/90 to-[#b9c9e0]/80" : "bg-gradient-to-b from-white/45 to-white/20"),
    )}
  >
    {children}
  </span>
);

const Dots = () => (
  <i className="block h-[32px] w-[9px] bg-[radial-gradient(circle,rgba(15,23,34,0.75)_0.7px,transparent_1px)] bg-[length:3px_4px]" />
);

const trayIcons: ReactNode[] = [
  <><rect width="16" height="16" rx="3" fill="#d22c2c" /><path d="M8 14L2.500 8Q1 4 4.500 3.500 7 3.500 8 5.500 9 3.500 11.500 3.500 15 4 13.500 8z" fill="#fff" /></>,
  <><path d="M1 5.500h3l4-4v13l-4-4H1z" fill="#fff" /><path d="M10 5q2 3 0 6M12 3q4 5 0 10" stroke="#d8dde5" fill="none" strokeWidth="1.200" /></>,
  <><rect x="1" y="1" width="14" height="10" fill="#9da1a6" stroke="#ddd" /><path d="M1 13h5v3H1zM9 13h6v3H9z" fill="#aeb2b6" /></>,
  <><circle cx="8" cy="8" r="7.500" fill="#1c86dc" stroke="#bfe2fa" /><path d="M12.500 4Q7 1.500 4.500 6T8 13q3 0 4.500-2M6 8h6" stroke="#d8f0ff" strokeWidth="1.600" fill="none" /></>,
  <><circle cx="8" cy="8" r="7.500" fill="#7d2428" stroke="#a85a5a" /><circle cx="8" cy="8" r="2.500" fill="none" stroke="#fff" strokeWidth="2" /><circle cx="8" cy="8" r="3.900" fill="none" stroke="#fff" strokeWidth="1.300" strokeDasharray="2 2" /></>,
  <><circle cx="7.500" cy="7.500" r="7" fill="#2d9a48" stroke="#9ad8a0" /><circle cx="7.500" cy="7.500" r="3.800" fill="none" stroke="#e0ffe0" strokeWidth="1.200" /><path d="M9.500 5l6 11h-12z" fill="#f0a72a" stroke="#a8610f" strokeWidth=".6" /><path d="M9.500 8.500v4M9.500 13.500v1.500" stroke="#222" strokeWidth="1.500" /></>,
  <><path d="M3 2q3-2 6 0 6 0 5 6 2 5-3 6-4 1-5-1-5 0-4-6-1-3 1-5z" fill="#84bf22" /><path d="M5 8l2.500 2.500L12 5.500" stroke="#fff" fill="none" strokeWidth="2" /></>,
  <><rect width="16" height="16" rx="1" fill="#e11f26" /><path d="M8 2q5 5 3.500 10-3.500 4-7 0Q3 7 8 2z" fill="#fff" /></>,
  <><rect width="16" height="15" fill="#4fa75a" /><circle cx="6" cy="6" r="4" fill="#e6f3ff" /><path d="M8 3l5-1v5l-5 5z" fill="#2f7fd0" /><path d="M11.500 5l4.500 10H7z" fill="#ffe13a" stroke="#8b7600" strokeWidth=".6" /><path d="M11.500 8v4M11.500 13v1.300" stroke="#222" strokeWidth="1.500" /></>,
  <><path d="M1 5.500h3l6-5v15l-6-5H1z" fill="#b8502c" stroke="#e8a68c" strokeWidth=".8" /><path d="M12 4q3 4 0 8" stroke="#6b5560" fill="none" /></>,
  <><ellipse cx="8" cy="8" rx="5.500" ry="7.800" fill="#1c4f98" /><path d="M5 5l6 6-3 3V2l3 3-6 6" stroke="#fff" fill="none" strokeWidth="1.200" /></>,
  <><rect x=".5" y="1.500" width="15" height="10" fill="#1d3d69" stroke="#cfe0f3" /><path d="M2 7l3-3 2 4 3-4 3 4" stroke="#6cc3ff" fill="none" strokeWidth="1.500" /><path d="M5 13h6v2H5z" fill="#cfd8e4" /></>,
  <><path d="M2 1v15" stroke="#fff" strokeWidth="1.500" /><path d="M3 2q4-1 6 1t5 0v6q-3 1-5 0T3 9z" fill="#f2f2f2" /><circle cx="11" cy="11.500" r="4.500" fill="#d4252a" /><path d="M9.200 9.700l3.600 3.600M12.800 9.700l-3.600 3.600" stroke="#fff" strokeWidth="1.400" /></>,
  <><path d="M1 2h7v6H1z" fill="#e0b42a" /><path d="M8 0h7v8H8z" fill="#d2452a" /><path d="M1 8h7v7H1z" fill="#4b9b3b" /><path d="M8 8h7v8H8z" fill="#c33" /><path d="M5 4h5v8H5z" fill="#6aa53c" /></>,
  <><path d="M12 4V2H3v13h3" fill="none" stroke="#fff" strokeWidth="1.500" /><path d="M5 6h9v4q0 3-3 3H8q-3 0-3-3z" fill="#5b6d8f" stroke="#fff" strokeWidth="1.200" /><path d="M7.500 3v3M11.500 3v3M9.500 13v3" stroke="#fff" strokeWidth="1.500" /></>,
  <><rect x="4.500" y="3.500" width="11" height="8" fill="#5b6d8f" stroke="#fff" strokeWidth="1.300" /><path d="M7 14.500h7M10.500 12v2M1 1v5q0 2 3 2" stroke="#fff" strokeWidth="1.500" fill="none" /></>,
  <><rect x="2" y="0" width="13" height="16" rx="3" fill="#f1f1f1" /><path d="M2 5.500h13M8.500 0v5.500" stroke="#777" /><path d="M3 1h5v4H3z" fill="#666" /></>,
];

const TaskBar = () => (
  <footer className="relative h-[40px] shrink-0 overflow-hidden border-t border-[#2b3a55] bg-[#445c8c]">
    <Blobs items={taskBlobs} w={1366} h={40} blur={10} id="task" />
    <div className="relative flex h-full items-center border-t border-white/40">
      <svg width="56" height="39" className="shrink-0">
        <defs>
          <radialGradient id="orb" cx=".5" cy=".85" r=".9"><stop offset="0" stopColor="#7fe0ff" /><stop offset=".45" stopColor="#3480b4" /><stop offset="1" stopColor="#1f3d5e" /></radialGradient>
        </defs>
        <circle cx="27" cy="19" r="18" fill="url(#orb)" stroke="#b9cfdf" strokeWidth="1" />
        <path d="M9.500 17a18 18 0 0 1 35 0q-17-6-35 0z" fill="#fff" opacity=".3" />
        <path d="M18 11.500q5-3 9 0l-1.500 7.500q-4-3-9 0z" fill="#ef6531" />
        <path d="M28.500 12q4 2.500 9 0l-2 7.500q-4 2.500-8.500 0z" fill="#8fc63d" />
        <path d="M16.200 20.500q5-3 9 0l-1.700 7.500q-4-3-9 0z" fill="#4aa5e0" />
        <path d="M26.700 21q4 2.500 8.800 0l-2 7.500q-4 2.500-8.500 0z" fill="#fbc72f" />
      </svg>
      <span className="flex w-[20px] shrink-0 pl-[2px]"><Dots /></span>
      <TaskButton className="w-[58px]" framed>
        <svg width="24" height="28"><path d="M1 1h15l7 7v19H1z" fill="#fff" stroke="#999" strokeWidth=".6" /><path d="M16 1v7h7z" fill="#c8ccd2" /></svg>
      </TaskButton>
      <TaskButton className="w-[66px]">
        <svg width="28" height="32"><ellipse cx="14" cy="16" rx="13.500" ry="15" fill="#dc2b26" /><ellipse cx="14" cy="16" rx="5" ry="11.500" fill="#4a5f86" /><path d="M4 8Q14-3 24 8" stroke="#f59a90" fill="none" strokeWidth="1.500" /></svg>
      </TaskButton>
      <TaskButton className="w-[58px]">
        <svg width="28" height="28" viewBox="0 0 28 28">
          <path d="M14 14L1.900 7a14 14 0 0 1 24.200 0z" fill="#e33b2e" /><path d="M14 14L1.900 7a14 14 0 0 0 12.100 21l6-10.500z" fill="#3fa64b" /><path d="M14 7h12.100a14 14 0 0 1-12.100 21l6-10.500z" fill="#fbd03b" />
          <circle cx="14" cy="14" r="6.500" fill="#fff" /><circle cx="14" cy="14" r="5.200" fill="#3d7fdd" />
        </svg>
      </TaskButton>
      <TaskButton className="w-[66px]">
        <svg width="32" height="32" viewBox="0 0 32 32">
          <path d="M27.500 18.500H11q.5 5 5.500 5 3.500 0 5-2.500h5.500q-2.500 7.500-10.500 7.500Q5 28 5 16.500T16.500 5Q28 5 27.500 18.500zM11 14h10.500q-.5-4.500-5-4.500T11 14z" fill="#3f9fe8" stroke="#0f4f94" strokeWidth="1" />
          <path d="M3 31Q-3 24 9 11T29 2q3 4-2 8 0-4-2-5Q18 5 10 14T4 26q-1 3-1 5z" fill="#f2c336" />
        </svg>
      </TaskButton>
      <TaskButton className="w-[58px]" framed>
        <svg width="30" height="32" viewBox="0 0 30 32">
          <circle cx="10" cy="10" r="9.500" fill="#10aeef" /><circle cx="20" cy="22" r="9.500" fill="#10aeef" /><circle cx="15" cy="16" r="13" fill="#10aeef" />
          <path d="M20.500 11.500q-1.500-3.500-6-3.500-5 .2-5 3.800 0 2.700 5 3.700 6 1.200 6 4.500Q20 24 15 24q-5 0-6-4" fill="none" stroke="#fff" strokeWidth="3.400" />
        </svg>
      </TaskButton>
      <TaskButton className="w-[63px]">
        <span className="flex flex-col items-center">
          <svg width="34" height="19" fill="none" strokeWidth="0.900">
            {["#b83a34", "#c8653a", "#bb9a36", "#93a63a", "#5f9a4c"].map((c, i) => (
              <path key={c} stroke={c} d={`M2 ${9 + i * 2.200}l5-4 3-3.500 3-1 3 3.500 3-3.500 3 1 3 3.500 6 4`} />
            ))}
          </svg>
          <span className="font-['Open_Sans',sans-serif] text-[12px] leading-[14px] text-[#0c1220]">alpari</span>
        </span>
      </TaskButton>
      <TaskButton className="w-[59px]" framed bright><Gear size={34} fill="#e22222" /></TaskButton>
      <TaskButton className="w-[61px]">
        <svg width="32" height="32"><rect width="32" height="32" rx="4" fill="#151719" /><text x="3" y="22" fontSize="16" fontWeight="900" fontStyle="italic" fontFamily="Liberation Sans" textLength="26" lengthAdjust="spacingAndGlyphs" fill="#fff">XM</text><path d="M4 11l4 5.500" stroke="#d92b2b" strokeWidth="2" fill="none" /></svg>
      </TaskButton>
      <TaskButton className="ml-[2px] w-[53px]" framed>
        <svg width="34" height="32">
          <path d="M2 4h8l2 2h19v22H2z" fill="#f0d67a" stroke="#c7a33a" strokeWidth=".7" /><path d="M2 9h29v19H2z" fill="#fbeaa6" /><path d="M5 2h5v3H5z" fill="#3fae4a" /><path d="M13 3h5v3h-5z" fill="#d33" /><path d="M21 4h5v3h-5z" fill="#38c" />
          <path d="M6 31v-8q0-3 3-3h16q3 0 3 3v8h-5v-6H11v6z" fill="#9cd1f0" stroke="#5d9cc8" strokeWidth=".8" />
        </svg>
      </TaskButton>
      <i className="h-[38px] w-[4px] shrink-0 rounded-r-[3px] border border-l-0 border-[#c6d0de]" />
      <TaskButton className="w-[62px]">
        <svg width="28" height="28"><path d="M7 1h19v22H7z" fill="#9cc7ea" stroke="#5b90bf" /><path d="M2 4h18v22H2z" fill="#cfe4f6" stroke="#6c9cc6" /><circle cx="12" cy="14" r="9" fill="#f0801e" stroke="#fff" /><path d="M9 9l8 5-8 5z" fill="#fff" /></svg>
      </TaskButton>
      <TaskButton className="w-[62px]">
        <svg width="28" height="28"><rect width="28" height="28" rx="4" fill="#7fa8c8" /><path d="M0 14Q14 14 28 4v-4H4Q0 0 0 4z" fill="#a8c8de" /><path d="M3 16q8 1 12-5t10-6" stroke="#fff" strokeWidth="2.400" fill="none" /><path d="M3 26Q9 26 11 20t14-8" stroke="#fff" strokeWidth="2.400" fill="none" /><circle cx="17" cy="22" r="2" fill="#fff" /></svg>
      </TaskButton>
      <TaskButton className="w-[60px]">
        <svg width="24" height="30">
          <rect x=".5" y=".5" width="22" height="29" rx="2" fill="#b4d4ee" stroke="#5b8db8" /><rect x="3" y="3" width="17" height="8" fill="#fbdca6" stroke="#c89a4a" strokeWidth=".6" /><text x="14" y="9.500" fontSize="7" fontFamily="Liberation Sans" fill="#333">0</text>
          {[0, 1, 2, 3].flatMap((r) => [0, 1, 2, 3].map((c) => <rect key={`${r}${c}`} x={3 + c * 4.5} y={13.500 + r * 4} width="3.300" height="2.800" fill={c === 3 && r > 2 ? "#f0962c" : "#f6fbff"} stroke="#6c93b8" strokeWidth=".4" />))}
        </svg>
      </TaskButton>
      <span className="ml-[9px] flex w-[20px] shrink-0"><Dots /></span>
      <span className="w-[30px] shrink-0 pb-[7px] font-['Open_Sans',sans-serif] text-[12px] tracking-[-0.3px] text-white">EN</span>
      <div className="flex shrink-0 gap-[8px]">
        {trayIcons.map((icon, i) => (
          <svg key={i} width="16" height="16">{icon}</svg>
        ))}
      </div>
      <div className="ml-auto mr-[9px] w-[60px] shrink-0 text-center font-['Open_Sans',sans-serif] text-[12px] leading-[17px] tracking-[-0.5px] text-white">
        <div>17:37</div>
        <div>28.09.2014</div>
      </div>
      <i className="h-[38px] w-[14px] shrink-0 border border-[#7d92b6] bg-gradient-to-r from-[#8ba0c4]/60 to-[#3a4f7c]/60" />
    </div>
  </footer>
);

export default function App() {
  return (
    <div className="flex h-[768px] w-[1366px] flex-col overflow-hidden bg-[#f0f0f0]">
      <TitleBar />
      <MenuBar />
      <Toolbar />
      <main className="relative h-[616px] shrink-0">
        <Chart />
        <Dialog />
      </main>
      <ChartTabs />
      <StatusBar />
      <TaskBar />
    </div>
  );
}
